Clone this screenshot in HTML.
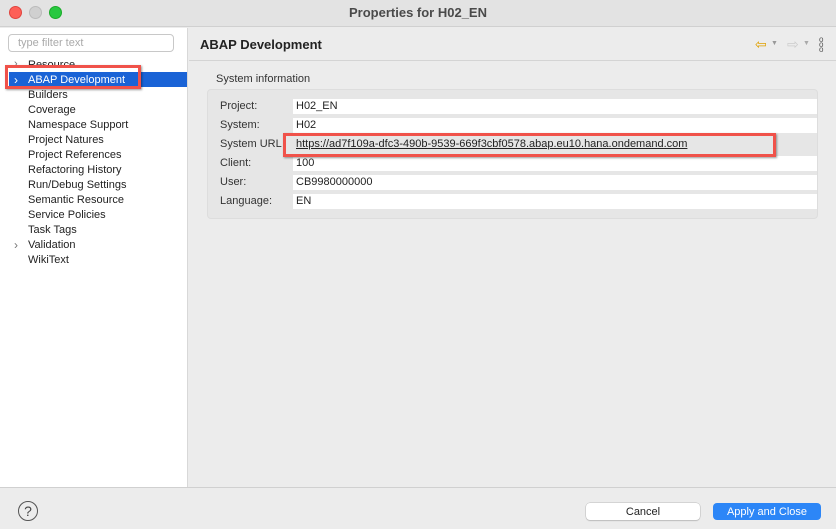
<!DOCTYPE html>
<html><head><style>
*{margin:0;padding:0;box-sizing:border-box}
body{width:836px;height:529px;overflow:hidden;background:#ececec;font-family:"Liberation Sans",sans-serif;font-size:11px;color:#222;position:relative}
.a{position:absolute}
.tree div{position:absolute;left:28px;font-size:11px;color:#222}
.lbl{position:absolute;left:220px;font-size:11px;color:#333}
.fld{position:absolute;left:293px;width:524px;height:15px;background:#fff;font-size:11px;padding-left:3px;line-height:15px}
</style></head><body>
<div class="a" style="left:0;top:0;width:836px;height:27px;background:#e3e3e3;border-bottom:1px solid #d0d0d0"></div>
<div class="a" style="left:9px;top:6px;width:13px;height:13px;border-radius:50%;background:#fe5f57;border:1px solid #e0443e"></div>
<div class="a" style="left:29px;top:6px;width:13px;height:13px;border-radius:50%;background:#d0d0d0;border:1px solid #bbb"></div>
<div class="a" style="left:49px;top:6px;width:13px;height:13px;border-radius:50%;background:#28c840;border:1px solid #1aab29"></div>
<div class="a" style="left:0;top:5px;width:836px;text-align:center;font-weight:bold;font-size:13px;color:#4a4a4a">Properties for H02_EN</div>
<div class="a" style="left:0;top:28px;width:188px;height:459px;background:#fff;border-right:1px solid #d8d8d8"></div>
<div class="a" style="left:8px;top:34px;width:166px;height:18px;border:1px solid #c8c8c8;border-radius:4px;color:#aaa;font-size:11px;padding:2px 0 0 9px">type filter text</div>
<div class="a" style="left:9px;top:72px;width:178px;height:15px;background:#1a63d6"></div>
<div class="tree">
<div style="top:59px">Resource</div>
<div style="top:74px;color:#fff">ABAP Development</div>
<div style="top:89px">Builders</div><div style="top:104px">Coverage</div><div style="top:119px">Namespace Support</div><div style="top:134px">Project Natures</div><div style="top:149px">Project References</div><div style="top:164px">Refactoring History</div><div style="top:179px">Run/Debug Settings</div><div style="top:194px">Semantic Resource</div><div style="top:209px">Service Policies</div><div style="top:224px">Task Tags</div><div style="top:239px">Validation</div><div style="top:254px">WikiText</div>
</div>
<div class="a" style="left:14px;top:58px;color:#777;font-size:11px">›</div>
<div class="a" style="left:14px;top:73px;color:#fff;font-size:12px">›</div>
<div class="a" style="left:14px;top:238px;color:#777;font-size:12px">›</div>
<div class="a" style="left:5px;top:65px;width:136px;height:24px;border:3px solid #f0524a;box-shadow:1px 1px 2px rgba(0,0,0,.4)"></div>
<div class="a" style="left:200px;top:37px;font-weight:bold;font-size:13px;color:#222">ABAP Development</div>
<div class="a" style="left:189px;top:60px;width:647px;height:1px;background:#d4d4d4"></div>
<div class="a" style="left:755px;top:36px;color:#e0a000;font-size:14px">⇦</div><div class="a" style="left:771px;top:40px;color:#999;font-size:7px">▼</div>
<div class="a" style="left:787px;top:36px;color:#ccc;font-size:14px">⇨</div><div class="a" style="left:803px;top:40px;color:#aaa;font-size:7px">▼</div>
<div class="a" style="left:819px;top:37px;color:#555;font-size:8px;line-height:5px">o<br>o<br>o</div>
<div class="a" style="left:216px;top:73px;color:#333">System information</div>
<div class="a" style="left:207px;top:89px;width:611px;height:130px;border:1px solid #ddd;border-radius:4px;background:#e6e6e6"></div>
<div class="lbl" style="top:100px">Project:</div><div class="fld" style="top:99px">H02_EN</div>
<div class="lbl" style="top:119px">System:</div><div class="fld" style="top:118px">H02</div>
<div class="lbl" style="top:138px">System URL</div><div class="fld" style="top:137px;background:#e6e6e6;text-decoration:underline">https://ad7f109a-dfc3-490b-9539-669f3cbf0578.abap.eu10.hana.ondemand.com</div>
<div class="lbl" style="top:157px">Client:</div><div class="fld" style="top:156px">100</div>
<div class="lbl" style="top:176px">User:</div><div class="fld" style="top:175px">CB9980000000</div>
<div class="lbl" style="top:195px">Language:</div><div class="fld" style="top:194px">EN</div>
<div class="a" style="left:283px;top:133px;width:493px;height:24px;border:3px solid #f0524a;box-shadow:1px 1px 2px rgba(0,0,0,.4)"></div>
<div class="a" style="left:0;top:487px;width:836px;height:1px;background:#d0d0d0"></div>
<div class="a" style="left:18px;top:501px;width:20px;height:20px;border:1px solid #555;border-radius:50%;text-align:center;font-size:14px;line-height:18px;color:#444">?</div>
<div class="a" style="left:586px;top:503px;width:114px;height:17px;background:#fff;border-radius:4px;box-shadow:0 0 0 .5px #bbb,0 1px 1px rgba(0,0,0,.2);text-align:center;line-height:18px">Cancel</div>
<div class="a" style="left:713px;top:503px;width:108px;height:17px;background:#2c86f7;border-radius:4px;color:#fff;text-align:center;line-height:18px">Apply and Close</div>
</body></html>
